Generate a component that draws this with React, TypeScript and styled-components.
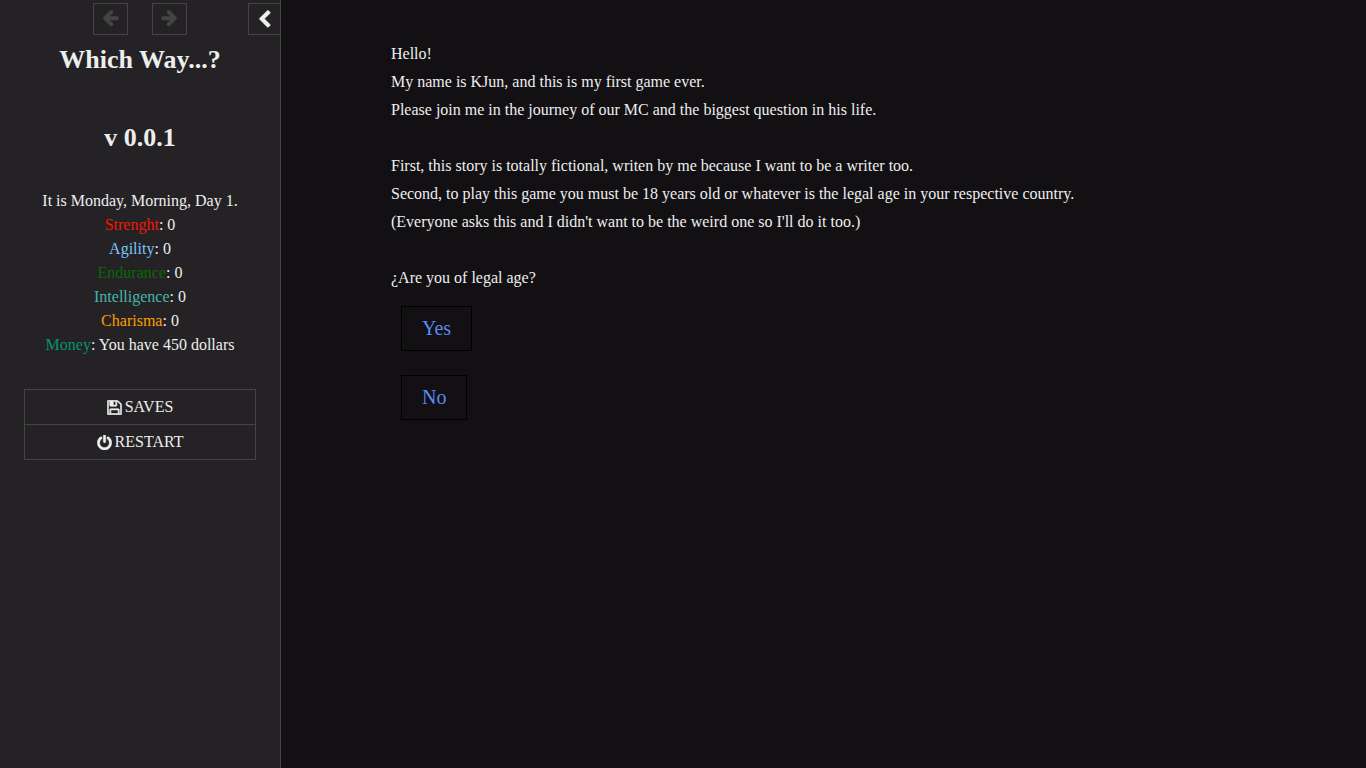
import React from "react";
import styled, { createGlobalStyle } from "styled-components";

const GlobalStyle = createGlobalStyle`
  *, *::before, *::after { box-sizing: border-box; }
  body {
    margin: 0;
    background: #121013;
    color: #eee;
    font: 16px/24px "Liberation Serif", "Times New Roman", serif;
  }
  button { font: inherit; color: inherit; margin: 0; cursor: pointer; }
`;

const Layout = styled.div`
  display: flex;
  min-height: 100vh;
`;

const Sidebar = styled.aside`
  flex: 0 0 281px;
  background: #242225;
  border-right: 1px solid #444;
  text-align: center;
`;

const Tray = styled.div`
  display: grid;
  grid-template-columns: 1fr auto 1fr;
  padding-top: 3px;
`;

const History = styled.div`
  grid-column: 2;
  display: flex;
  gap: 24px;
`;

const TrayButton = styled.button<{ $edge?: boolean }>`
  display: flex;
  align-items: center;
  justify-content: center;
  width: ${(p) => (p.$edge ? 32 : 35)}px;
  height: 32px;
  padding: 0 0 ${(p) => (p.$edge ? 0 : 3)}px;
  background: transparent;
  border: 1px solid #444;
  border-right-width: ${(p) => (p.$edge ? 0 : 1)}px;
  justify-self: end;

  &:disabled {
    color: #444;
    cursor: default;
  }
`;

const SidebarBody = styled.div`
  padding: 5px 24px 24px;
`;

const Title = styled.h1`
  margin: 0;
  font-size: 26px;
  line-height: 39px;
`;

const Version = styled.h2`
  margin: 39px 0 32px;
  font-size: 26px;
  line-height: 39px;
`;

const Stats = styled.ul`
  list-style: none;
  margin: 0;
  padding: 0;
`;

const StatName = styled.span<{ $color: string }>`
  color: ${(p) => p.$color};
`;

const Menu = styled.ul`
  list-style: none;
  margin: 32px 0 0;
  padding: 0;
  border: 1px solid #444;
`;

const MenuItem = styled.li`
  & + & { border-top: 1px solid #444; }
`;

const MenuButton = styled.button`
  display: flex;
  align-items: center;
  justify-content: center;
  gap: 3px;
  width: 100%;
  height: 34px;
  padding: 0;
  background: transparent;
  border: 0;
  text-transform: uppercase;
`;

const Glyph = styled.svg<{ $size: number }>`
  width: ${(p) => p.$size}px;
  height: ${(p) => p.$size}px;
  fill: currentColor;
  stroke: currentColor;
`;

const Story = styled.main`
  flex: 1;
  min-width: 0;
  padding: 40px 110px;
  line-height: 28px;
`;

const Paragraph = styled.p`
  margin: 0 0 28px;

  &:last-of-type { margin-bottom: 14px; }
`;

const Choices = styled.div`
  display: flex;
  flex-direction: column;
  align-items: flex-start;
  gap: 24px;
  padding-left: 10px;
`;

const Choice = styled.button`
  padding: 10px 20px;
  background: transparent;
  border: 1px solid #000;
  color: #5b8bef;
  font-size: 20px;
  line-height: 23px;
`;

const icons = {
  back: {
    box: "0 0 1792 1792",
    stroke: 0,
    d: "M1664 896v128q0 53-32.5 90.500t-84.500 37.500h-704l293 294q38 36 38 90t-38 90l-75 76q-37 37-90 37-52 0-91-37l-651-652q-37-37-37-90 0-52 37-91l651-650q38-38 91-38 52 0 90 38l75 74q38 38 38 91t-38 91l-293 293h704q52 0 84.500 37.500t32.500 90.500z",
  },
  chevron: {
    box: "0 0 1792 1792",
    stroke: 40,
    d: "M1427 301l-531 531 531 531q19 19 19 45t-19 45l-166 166q-19 19-45 19t-45-19l-742-742q-19-19-19-45t19-45l742-742q19-19 45-19t45 19l166 166q19 19 19 45t-19 45z",
  },
  save: {
    box: "98 98 1596 1596",
    stroke: 60,
    d: "M512 1536h768v-384h-768v384zm896 0h128v-896q0-14-10-38.500t-20-34.500l-281-281q-10-10-34-20t-39-10v416q0 40-28 68t-68 28h-576q-40 0-68-28t-28-68v-416h-128v1280h128v-416q0-40 28-68t68-28h832q40 0 68 28t28 68v416zm-384-928v-320q0-13-9.500-22.500t-22.500-9.500h-192q-13 0-22.500 9.500t-9.500 22.500v320q0 13 9.500 22.500t22.500 9.500h192q13 0 22.500-9.500t9.500-22.500zm640 32v928q0 40-28 68t-68 28h-1344q-40 0-68-28t-28-68v-1344q0-40 28-68t68-28h928q40 0 88 20t76 48l280 280q28 28 48 76t20 88z",
  },
  power: {
    box: "98 64 1596 1600",
    stroke: 50,
    d: "M1664 896q0 156-61 298t-164 245-245 164-298 61-298-61-245-164-164-245-61-298q0-182 80.500-343t226.500-270q43-32 95.500-25t83.500 50q32 42 24.500 94.500t-49.500 84.500q-98 74-151.500 181t-53.500 228q0 104 40.500 198.500t109.500 163.500 163.500 109.500 198.500 40.500 198.500-40.500 163.500-109.500 109.500-163.500 40.500-198.500q0-121-53.500-228t-151.500-181q-42-32-49.500-84.500t24.500-94.500q31-43 84-50t95 25q146 109 226.500 270t80.500 343zm-640-768v640q0 52-38 90t-90 38-90-38-38-90v-640q0-52 38-90t90-38 90 38 38 90z",
  },
};

function Icon({ name, size, flip }: { name: keyof typeof icons; size: number; flip?: boolean }) {
  const { box, stroke, d } = icons[name];
  return (
    <Glyph $size={size} viewBox={box} strokeWidth={stroke} aria-hidden="true">
      <path d={d} transform={flip ? "translate(1792 0) scale(-1 1)" : undefined} />
    </Glyph>
  );
}

const stats = [
  { name: "Strenght", color: "#f21800", value: "0" },
  { name: "Agility", color: "#7ac5f5", value: "0" },
  { name: "Endurance", color: "#086a08", value: "0" },
  { name: "Intelligence", color: "#45b5aa", value: "0" },
  { name: "Charisma", color: "#ff9d00", value: "0" },
  { name: "Money", color: "#079468", value: "You have 450 dollars" },
];

export default function App() {
  return (
    <>
      <GlobalStyle />
      <Layout>
        <Sidebar>
          <Tray>
            <History>
              <TrayButton disabled aria-label="Go back"><Icon name="back" size={19} /></TrayButton>
              <TrayButton disabled aria-label="Go forward"><Icon name="back" size={19} flip /></TrayButton>
            </History>
            <TrayButton $edge aria-label="Toggle the sidebar"><Icon name="chevron" size={19} /></TrayButton>
          </Tray>
          <SidebarBody>
            <Title>Which Way...?</Title>
            <Version>v 0.0.1</Version>
            <Stats>
              <li>It is Monday, Morning, Day 1.</li>
              {stats.map((s) => (
                <li key={s.name}>
                  <StatName $color={s.color}>{s.name}</StatName>: {s.value}
                </li>
              ))}
            </Stats>
            <Menu>
              <MenuItem><MenuButton><Icon name="save" size={15} />Saves</MenuButton></MenuItem>
              <MenuItem><MenuButton><Icon name="power" size={15} />Restart</MenuButton></MenuItem>
            </Menu>
          </SidebarBody>
        </Sidebar>
        <Story>
          <Paragraph>
            Hello!<br />
            My name is KJun, and this is my first game ever.<br />
            Please join me in the journey of our MC and the biggest question in his life.
          </Paragraph>
          <Paragraph>
            First, this story is totally fictional, writen by me because I want to be a writer too.<br />
            Second, to play this game you must be 18 years old or whatever is the legal age in your respective country.<br />
            (Everyone asks this and I didn't want to be the weird one so I'll do it too.)
          </Paragraph>
          <Paragraph>¿Are you of legal age?</Paragraph>
          <Choices>
            <Choice>Yes</Choice>
            <Choice>No</Choice>
          </Choices>
        </Story>
      </Layout>
    </>
  );
}
